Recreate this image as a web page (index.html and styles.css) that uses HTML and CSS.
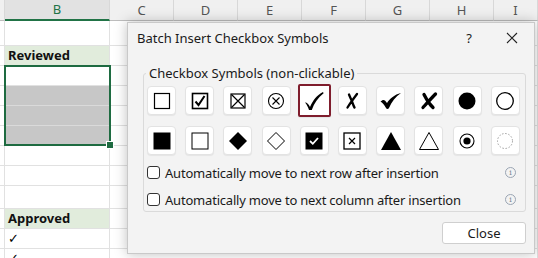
FILE: index.html
```html
<!DOCTYPE html>
<html lang="en">

<head>
    <meta charset="UTF-8">
    <title>Batch Insert Checkbox Symbols</title>
    <link rel="stylesheet" href="styles.css">
</head>

<body>
    <div class="sheet">
        <div class="row head">
            <div class="c ca"></div>
            <div class="c cb">B</div>
            <div class="c">C</div>
            <div class="c">D</div>
            <div class="c">E</div>
            <div class="c">F</div>
            <div class="c">G</div>
            <div class="c">H</div>
            <div class="c">I</div>
        </div>
        <div class="row r24">
            <div class="c ca"></div><div class="c cb"></div><div class="c"></div>
        </div>
        <div class="row">
            <div class="c ca"></div><div class="c cb title-cell">Reviewed</div><div class="c"></div>
        </div>
        <div class="row">
            <div class="c ca"></div><div class="c cb"></div><div class="c"></div>
        </div>
        <div class="row">
            <div class="c ca"></div><div class="c cb grey"></div><div class="c"></div>
        </div>
        <div class="row">
            <div class="c ca"></div><div class="c cb grey"></div><div class="c"></div>
        </div>
        <div class="row">
            <div class="c ca"></div><div class="c cb grey"></div><div class="c"></div>
        </div>
        <div class="row">
            <div class="c ca"></div><div class="c cb"></div><div class="c"></div>
        </div>
        <div class="row">
            <div class="c ca"></div><div class="c cb"></div><div class="c"></div>
        </div>
        <div class="row r23">
            <div class="c ca"></div><div class="c cb"></div><div class="c"></div>
        </div>
        <div class="row">
            <div class="c ca"></div><div class="c cb title-cell">Approved</div><div class="c"></div>
        </div>
        <div class="row">
            <div class="c ca"></div><div class="c cb tick">✓</div><div class="c"></div>
        </div>
        <div class="row">
            <div class="c ca"></div><div class="c cb tick">✓</div><div class="c"></div>
        </div>

        <!-- selected range B3:B6 -->
        <div class="selection"><span class="handle"></span></div>
    </div>

    <div class="dialog">
        <div class="titlebar">
            <span class="dlg-title">Batch Insert Checkbox Symbols</span>
            <span class="help">?</span>
            <svg class="close-x" width="12" height="12" viewBox="0 0 12 12">
                <path d="M1 1L11 11M11 1L1 11" stroke="#222" stroke-width="1.1" fill="none" />
            </svg>
        </div>

        <fieldset class="group">
            <legend>Checkbox Symbols (non-clickable)</legend>

            <div class="symbols">
                <!-- row 1 -->
                <div class="sym"><svg width="20" height="20" viewBox="0 0 20 20"><rect x="2.5" y="2.5" width="15" height="15" fill="#fff" stroke="#000" stroke-width="1.2" /></svg></div>
                <div class="sym"><svg width="20" height="20" viewBox="0 0 20 20"><rect x="2.5" y="2.5" width="15" height="15" fill="none" stroke="#000" stroke-width="1.6" /><path d="M5.5 10.5L8.5 14L14.5 5" fill="none" stroke="#000" stroke-width="2" /></svg></div>
                <div class="sym"><svg width="20" height="20" viewBox="0 0 20 20"><rect x="3" y="3" width="14" height="14" fill="none" stroke="#000" stroke-width="1.2" /><path d="M3.5 3.5L16.5 16.5M16.5 3.5L3.5 16.5" stroke="#000" stroke-width="1.2" /></svg></div>
                <div class="sym"><svg width="20" height="20" viewBox="0 0 20 20"><circle cx="10" cy="10" r="7.5" fill="none" stroke="#000" stroke-width="1.1" /><path d="M6.5 6.5L13.5 13.5M13.5 6.5L6.5 13.5" stroke="#000" stroke-width="1.1" /></svg></div>
                <div class="sym active"><svg width="22" height="22" viewBox="0 0 22 22"><path d="M2 12.5C3.8 12.3 5.5 14 7 17C10 10 14 5 20 2L20.6 3.2C15 7.5 11.2 13 8.8 20L6 20C5 17 3.8 14.5 2 12.5Z" fill="#000" /></svg></div>
                <div class="sym"><svg width="20" height="20" viewBox="0 0 20 20"><path d="M7 3.5C8 6 9 8 10 10.5M15 3C12 7 9 11 5.5 16.5M10 10.5C11 13 11.5 15 12.5 16.5" fill="none" stroke="#000" stroke-width="2.3" stroke-linecap="round" /></svg></div>
                <div class="sym"><svg width="24" height="20" viewBox="0 0 24 20"><path d="M1.5 10.5C3.5 8.5 5 8.5 6.2 9.8L8 12C11 7.5 15.5 3.5 22 2C16.5 6 12.8 10.5 10 17C9.3 18.2 7.6 18.2 7 17C5.5 14 3.8 12 1.5 10.5Z" fill="#000" /></svg></div>
                <div class="sym"><svg width="22" height="20" viewBox="0 0 22 20"><path d="M6 3.5C7.5 6.5 9.5 10 11.5 12.5C12.5 14 14 15.5 15 16.5M17.5 3C13.5 7 9.5 11.5 5 16.5" fill="none" stroke="#000" stroke-width="3.3" stroke-linecap="round" /></svg></div>
                <div class="sym"><svg width="20" height="20" viewBox="0 0 20 20"><circle cx="10" cy="10" r="8.5" fill="#000" /></svg></div>
                <div class="sym"><svg width="20" height="20" viewBox="0 0 20 20"><circle cx="10" cy="10" r="8.3" fill="#fff" stroke="#000" stroke-width="1.3" /></svg></div>

                <!-- row 2 -->
                <div class="sym"><svg width="20" height="20" viewBox="0 0 20 20"><rect x="1.5" y="1.5" width="17" height="17" fill="#000" /></svg></div>
                <div class="sym"><svg width="20" height="20" viewBox="0 0 20 20"><rect x="2" y="2" width="16" height="16" fill="#fff" stroke="#000" stroke-width="1" /></svg></div>
                <div class="sym"><svg width="20" height="20" viewBox="0 0 20 20"><path d="M10 1L19 10L10 19L1 10Z" fill="#000" /></svg></div>
                <div class="sym"><svg width="20" height="20" viewBox="0 0 20 20"><path d="M10 1.5L18.5 10L10 18.5L1.5 10Z" fill="#fff" stroke="#000" stroke-width="1" /></svg></div>
                <div class="sym"><svg width="20" height="20" viewBox="0 0 20 20"><rect x="1.5" y="1.5" width="17" height="17" fill="#000" /><path d="M6 10L8.8 12.8L14 7" fill="none" stroke="#fff" stroke-width="1.8" /></svg></div>
                <div class="sym"><svg width="20" height="20" viewBox="0 0 20 20"><rect x="2" y="2" width="16" height="16" fill="#fff" stroke="#000" stroke-width="1.3" /><path d="M7 7L13 13M13 7L7 13" stroke="#000" stroke-width="1.2" /></svg></div>
                <div class="sym"><svg width="22" height="20" viewBox="0 0 22 20"><path d="M11 1L21 19L1 19Z" fill="#000" /></svg></div>
                <div class="sym"><svg width="22" height="20" viewBox="0 0 22 20"><path d="M11 1.5L20.5 18.5L1.5 18.5Z" fill="#fff" stroke="#000" stroke-width="1" /></svg></div>
                <div class="sym"><svg width="20" height="20" viewBox="0 0 20 20"><circle cx="10" cy="10" r="7" fill="none" stroke="#000" stroke-width="1.1" /><circle cx="10" cy="10" r="3.6" fill="#000" /></svg></div>
                <div class="sym"><svg width="20" height="20" viewBox="0 0 20 20"><circle cx="10" cy="10" r="7.5" fill="none" stroke="#9a9a9a" stroke-width="0.9" stroke-dasharray="1.6 1.6" /></svg></div>
            </div>

            <label class="opt">
                <span class="box"></span>
                <span class="opt-text">Automatically move to next row after insertion</span>
                <span class="info">i</span>
            </label>
            <label class="opt">
                <span class="box"></span>
                <span class="opt-text">Automatically move to next column after insertion</span>
                <span class="info">i</span>
            </label>
        </fieldset>

        <div class="footer">
            <button class="btn">Close</button>
        </div>
    </div>
</body>

</html>
```

FILE: styles.css
```css
body {
    margin: 0;
    padding: 0;
    width: 538px;
    height: 258px;
    overflow: hidden;
    background-color: #fff;
    font-family: 'Noto Sans', 'Open Sans', sans-serif;
    position: relative;
}

/* spreadsheet behind the dialog */

.sheet {
    position: relative;
    width: 538px;
}

.row {
    display: flex;
    height: 20px;
}

.r24 {
    height: 25px;
}

.r23 {
    height: 23px;
}

.c {
    box-sizing: border-box;
    width: 64px;
    flex: none;
    border-right: 1px solid #e1e1e1;
    border-bottom: 1px solid #e1e1e1;
}

.c.ca {
    width: 5px;
}

.c.cb {
    width: 105px;
}

.row .c:last-child {
    flex: 1;
}

.head {
    height: 21px;
    background-color: #f0f0f0;
}

.head .c {
    font-size: 13px;
    line-height: 20px;
    text-align: center;
    color: #555;
    border-right: 1px solid #d8d8d8;
    border-bottom: 1px solid #bdbdbd;
}

.head .c.cb {
    background-color: #e2e2e2;
    color: #217346;
    border-bottom: 2px solid #217346;
    line-height: 19px;
}

.title-cell {
    background-color: #e1ecdc;
    font-weight: bold;
    font-size: 13px;
    line-height: 19px;
    padding-left: 3px;
    color: #111;
}

.tick {
    font-family: 'DejaVu Sans', sans-serif;
    font-size: 13px;
    line-height: 19px;
    padding-left: 3px;
}

.grey {
    background-color: #c7c7c7;
    border-bottom-color: #dadada;
}

.selection {
    position: absolute;
    left: 4px;
    top: 65px;
    width: 107px;
    height: 81px;
    box-sizing: border-box;
    border: 2px solid #1e6b41;
}

.handle {
    position: absolute;
    right: -5px;
    bottom: -5px;
    width: 6px;
    height: 6px;
    background-color: #1e6b41;
    border: 1px solid #fff;
}

/* dialog */

.dialog {
    position: absolute;
    left: 127px;
    top: 22px;
    width: 408px;
    height: 232px;
    box-sizing: border-box;
    background-color: #f3f3f3;
    border: 1px solid #c9c9c9;
    box-shadow: 0 0 12px rgba(0, 0, 0, 0.25);
    display: flex;
    flex-direction: column;
}

.titlebar {
    display: flex;
    align-items: center;
    height: 29px;
    padding-left: 9px;
    font-size: 13px;
    color: #1a1a1a;
}

.dlg-title {
    flex: 1;
}

.help {
    font-size: 13px;
    margin-right: 34px;
}

.close-x {
    margin-right: 16px;
}

.group {
    margin: 12px 8px 0 15px;
    padding: 4px 0 0 3px;
    border: 1px solid #dadada;
    border-radius: 3px;
    height: 148px;
    box-sizing: border-box;
}

.group legend {
    font-size: 13px;
    color: #1a1a1a;
    padding: 0 3px;
    margin-left: -1px;
}

.symbols {
    display: grid;
    grid-template-columns: repeat(10, 29px);
    grid-auto-rows: 29px;
    column-gap: 9.2px;
    row-gap: 11px;
}

.sym {
    box-sizing: border-box;
    background-color: #fff;
    border: 1px solid #e3e3e3;
    border-radius: 4px;
    box-shadow: 0 1px 1px rgba(0, 0, 0, 0.06);
    display: flex;
    align-items: center;
    justify-content: center;
}

.sym.active {
    border: 2px solid #7f1d2d;
    border-radius: 2px;
    margin: -2px;
}

.opt {
    display: flex;
    align-items: center;
    height: 27px;
    font-size: 13px;
    color: #1a1a1a;
}

.opt:first-of-type {
    margin-top: 4px;
}

.box {
    box-sizing: border-box;
    width: 13px;
    height: 13px;
    border: 1px solid #333;
    border-radius: 3px;
    background-color: #fff;
    margin-right: 5px;
}

.opt-text {
    flex: 1;
    letter-spacing: -0.2px;
}

.info {
    box-sizing: border-box;
    width: 11px;
    height: 11px;
    border: 1px solid #9aa5b3;
    border-radius: 50%;
    font-size: 8px;
    line-height: 9px;
    text-align: center;
    color: #7b8794;
    font-family: 'DejaVu Serif', serif;
    margin-right: 9px;
}

.footer {
    display: flex;
    justify-content: flex-end;
    padding: 10px 8px 0 0;
}

.btn {
    width: 84px;
    height: 22px;
    box-sizing: border-box;
    background-color: #fff;
    border: 1px solid #cfcfcf;
    border-radius: 3px;
    font-family: 'Noto Sans', sans-serif;
    font-size: 13px;
    color: #1a1a1a;
    padding: 0;
}
```
